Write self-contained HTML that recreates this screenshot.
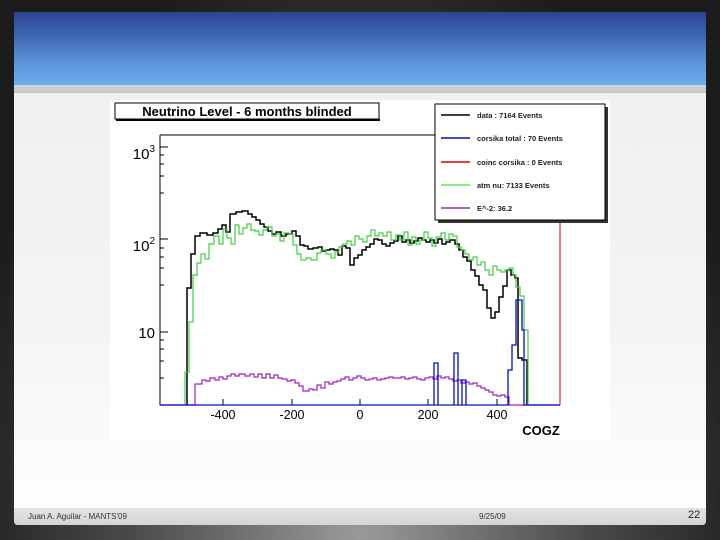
<!DOCTYPE html>
<html><head><meta charset="utf-8"><style>
html,body{margin:0;padding:0}
body{width:720px;height:540px;position:relative;overflow:hidden;background:radial-gradient(ellipse at 50% 100%,#9a9a9a 0%,#4a4a4a 45%,#1c1c1c 80%);font-family:"Liberation Sans",sans-serif}
.slide{position:absolute;left:14px;top:12px;width:692px;height:513px;background:linear-gradient(#eeeeee,#f4f4f4 60%,#fff);border-radius:0 0 4px 4px;overflow:hidden}
.hdr{position:absolute;left:0;top:0;width:692px;height:73px;background:linear-gradient(#2a4590 0%,#3f6ab8 35%,#5b94dc 70%,#6eaeee 100%)}
.bar{position:absolute;left:0;top:73px;width:692px;height:8px;background:linear-gradient(#d6d6d6,#c4c4c4)}
.ftr{position:absolute;left:0;top:496px;width:692px;height:17px;background:linear-gradient(#e4e4e4,#d4d4d4);font-size:8px;color:#333}
</style></head><body>
<div class="slide">
<div class="hdr"></div><div class="bar"></div>
<div class="ftr"><span style="position:absolute;left:14px;top:4px">Juan A. Aguilar - MANTS'09</span><span style="position:absolute;left:465px;top:4px">9/25/09</span><span style="position:absolute;left:674px;top:1px;font-size:11px;color:#222">22</span></div>
</div>
<svg style="position:absolute;left:0;top:0" width="720" height="540">
<rect x="110" y="100" width="500" height="340" fill="#fff"/>
<g font-family="Liberation Sans" fill="#000">
<rect x="115" y="103" width="264" height="16" fill="#fff" stroke="#000"/>
<line x1="116" y1="120" x2="380" y2="120" stroke="#000" stroke-width="2"/>
<text x="247" y="116" font-size="13" font-weight="bold" text-anchor="middle">Neutrino Level - 6 months blinded</text>
<path d="M160 135 H435 M160 135 V405 H560" fill="none" stroke="#000"/>
<line x1="560" y1="220" x2="560" y2="405" stroke="#c00" stroke-width="1"/>
<path d="M160 147h8M160 239h8M160 332h8M160 378h4M160 361h4M160 349h4M160 340h4M160 285h4M160 268h4M160 257h4M160 248h4M160 193h4M160 176h4M160 164h4M160 155h4" stroke="#000"/>
<path d="M223 405v-6M292 405v-6M360 405v-6M428 405v-6M497 405v-6" stroke="#000"/>
<text x="155" y="159" font-size="15" text-anchor="end">10<tspan font-size="10" dy="-7">3</tspan></text>
<text x="155" y="251" font-size="15" text-anchor="end">10<tspan font-size="10" dy="-7">2</tspan></text>
<text x="155" y="338" font-size="15" text-anchor="end">10</text>
<g font-size="12.5" text-anchor="middle"><text x="223" y="419">-400</text><text x="292" y="419">-200</text><text x="360" y="419">0</text><text x="428" y="419">200</text><text x="497" y="419">400</text></g>
<text x="541" y="435" font-size="13" font-weight="bold" text-anchor="middle">COGZ</text>
<path d="M187 405V288H191V254H195V236H200V233H207V235H213V233H218V229H222V225H226V232H230V214H236V212H242V211H248V214H252V217H256V220H260V224H264V227H268V231H272V234H276V232H281V236H286V234H292V231H296V236H300V245H304V246H308V249H313V248H318V247H322V251H326V250H330V249H334V250H338V255H342V246H346V248H350V265H354V258H358V255H362V250H366V247H370V244H374V239H378V240H382V244H386V246H390V243H394V241H398V236H402V242H406V240H410V243H414V241H418V238H422V240H426V242H430V240H434V243H438V239H442V244H446V242H450V240H455V244H459V250H463V257H467V261H471V270H475V276H479V285H483V290H487V308H491V318H495V312H499V297H503V286H507V270H511V275H515V278H518V358H522V360H527V405" fill="none" stroke="#000" stroke-width="1.5"/>
<path d="M185 405V372H189V322H193V275H197V263H201V254H205V259H209V244H214V236H219V244H223V229H227V238H231V244H235V225H239V234H243V228H247V224H251V230H255V231H259V235H263V230H267V227H272V236H276V234H280V241H284V233H289V234H293V245H297V254H301V260H306V258H311V260H317V253H321V250H326V254H331V258H335V252H339V247H343V244H347V241H351V245H355V236H359V239H363V242H367V236H371V230H375V236H379V233H383V236H387V232H391V240H396V235H400V240H404V232H408V245H412V237H416V244H420V240H424V232H428V238H432V246H436V237H441V233H445V240H449V234H453V236H457V247H461V250H465V254H469V260H473V257H477V265H481V262H485V270H489V275H493V266H497V270H501V272H505V270H509V268H513V275H516V287H520V296H524V330H528V405" fill="none" stroke="#4c4" stroke-width="1.2"/>
<path d="M160 405H195V384H202V380H206V381H210V378H215V380H219V377H223V379H227V376H231V374H235V376H239V374H245V376H250V374H254V377H258V374H262V378H266V374H270V378H274V375H278V378H282V379H287V381H291V380H295V383H299V386H303V391H309V389H313V390H317V385H321V388H325V382H329V384H333V382H337V381H341V379H345V377H349V380H353V378H357V376H361V378H365V380H369V379H373V378H377V380H381V379H385V378H389V377H393V378H397V378H401V377H405V379H409V378H413V377H417V379H421V380H425V378H429V377H433V379H437V376H441V378H445V377H449V379H453V381H457V380H461V383H465V382H469V384H473V383H477V386H481V388H485V390H489V392H493V395H497V396H501V395H505V397H509V405H560" fill="none" stroke="#a020c0" stroke-width="1.2"/>
<path d="M160 405H434V363H438V405H454V353H458V405H462V380H466V405H508V370H512V345H516V300H520V300H522V330H524V405H560" fill="none" stroke="#0010c0" stroke-width="1.3"/>
<rect x="438" y="107" width="170" height="116" fill="#333"/>
<rect x="435" y="104" width="170" height="116" fill="#fff" stroke="#000"/>
<g stroke-width="1.5"><line x1="441" y1="115" x2="470" y2="115" stroke="#000"/><line x1="441" y1="138" x2="470" y2="138" stroke="#0010c0"/><line x1="441" y1="162" x2="470" y2="162" stroke="#d00"/><line x1="441" y1="185" x2="470" y2="185" stroke="#6d6"/><line x1="441" y1="208" x2="470" y2="208" stroke="#a020c0"/></g>
<g font-size="7.5" font-weight="bold" fill="#222"><text x="477" y="118">data : 7164 Events</text><text x="477" y="141">corsika total : 70 Events</text><text x="477" y="165">coinc corsika : 0 Events</text><text x="477" y="188">atm nu: 7133 Events</text><text x="477" y="211">E^-2: 36.2</text></g>
</g>
</svg>
</body></html>
